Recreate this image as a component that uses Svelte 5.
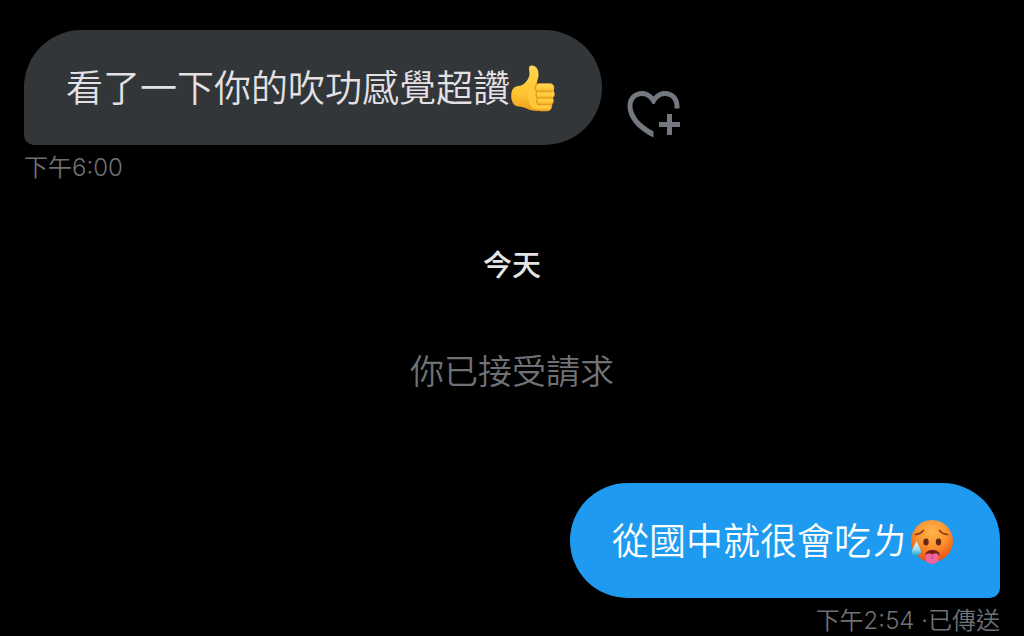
<script>
  let liked = $state(false);
</script>

<main class="chat">
  <article class="message received">
    <div class="row">
      <p class="bubble">
        <span>看了一下你的吹功感覺超讚</span>
        <svg class="emoji" viewBox="0 0 48 48" role="img" aria-label="👍">
          <defs>
            <linearGradient id="hand" x1="0" y1="0" x2="0" y2="1">
              <stop offset="0" stop-color="#ffd84f" />
              <stop offset=".6" stop-color="#ffc532" />
              <stop offset="1" stop-color="#eca01c" />
            </linearGradient>
            <linearGradient id="finger" x1="0" y1="0" x2="0" y2="1">
              <stop offset="0" stop-color="#ffdc58" />
              <stop offset=".65" stop-color="#ffc738" />
              <stop offset="1" stop-color="#e6981b" />
            </linearGradient>
          </defs>
          <path fill="url(#hand)" d="M4 23.500C7 21.500 10 22.500 13 20.500C17 17.500 19.500 14 19.500 9C19.500 6 17.500 2 21.500 1.500C26.500 1 29 6.500 28.500 11.500C28.200 15 27 17 26.500 20H40C43 20 44.500 22 44 25L42 43C41.500 46 39 47 35 47H27C20 47 17 44 12 43L6 42C0 39 0 27 4 23.500Z" />
          <g fill="url(#finger)" stroke="#e7a020" stroke-width=".6">
            <rect x="27" y="39" width="14" height="8" rx="4" />
            <rect x="26" y="32.500" width="17.500" height="8.500" rx="4.200" />
            <rect x="25.500" y="26" width="19" height="8.500" rx="4.200" />
            <rect x="25.500" y="19.500" width="18.500" height="8.500" rx="4.200" />
          </g>
          <path fill="#ffc73a" d="M18 20H27C26 23 27 26 27 28C26 31 27 34 28 36C27 40 28 42 30 45H24C18 42 17 30 18 20Z" />
          <path fill="none" stroke="#df981d" stroke-width="1.200" stroke-linecap="round" d="M27 19.500C24.500 22 24.500 26 27 27.500C25.500 30 26 33 27.500 34C26 37 26.500 40 29 41" />
        </svg>
      </p>
      <button class="like" type="button" aria-label="新增回應" aria-pressed={liked} onclick={() => (liked = !liked)}>
        <svg viewBox="0 0 54 48" aria-hidden="true">
          <path fill="currentColor" d="M26.500 6.500C29.500 3 33.500 1 38 1C46.500 1 52.500 7.500 52.500 16V18.500H47.500V16C47.500 10 43.500 6 38 6C33.500 6 30 9 27.500 14H25.500C23 9 19.500 6 15 6C9.500 6 5.500 10 5.500 16C5.500 24.500 12.500 34 26.500 41.500V47.500C10.500 40 .5 28 .5 16C.5 7.500 6.500 1 15 1C19.500 1 23.500 3 26.500 6.500Z" />
          <path fill="none" stroke="currentColor" stroke-width="5" d="M42.500 24V45M32 34.500H53" />
        </svg>
      </button>
    </div>
    <time class="meta">下午6:00</time>
  </article>

  <h2 class="day">今天</h2>
  <p class="notice">你已接受請求</p>

  <article class="message sent">
    <p class="bubble">
      <span>從國中就很會吃ㄌ</span>
      <svg class="emoji" viewBox="0 0 48 48" role="img" aria-label="🥵">
        <defs>
          <radialGradient id="face" cx=".5" cy=".28" r=".72">
            <stop offset="0" stop-color="#ffb44d" />
            <stop offset=".5" stop-color="#fa942f" />
            <stop offset="1" stop-color="#ed4d12" />
          </radialGradient>
          <linearGradient id="drop" x1="0" y1="0" x2="0" y2="1">
            <stop offset="0" stop-color="#eefcff" />
            <stop offset=".55" stop-color="#91def5" />
            <stop offset="1" stop-color="#2499c8" />
          </linearGradient>
        </defs>
        <circle cx="24" cy="24" r="21" fill="url(#face)" />
        <path fill="none" stroke="#8b3812" stroke-width="1.700" stroke-linecap="round" d="M7.500 17.500C11 17.300 13.500 16 15.300 13.500M31.500 13.500C33.500 16 36 17.300 39.500 17.500" />
        <ellipse cx="18" cy="25" rx="2.700" ry="3.400" fill="#652710" />
        <ellipse cx="30.500" cy="25" rx="2.700" ry="3.400" fill="#652710" />
        <path fill="#702012" d="M17.500 38.500C16 31 33 31 31.500 38.500C30 39.500 19 39.500 17.500 38.500Z" />
        <path fill="#f0649e" d="M18 37.500C20 36 23 36.500 24.200 37.500C25.500 36.500 29 36 30.500 37.500V42C30.500 48.500 18 48.500 18 42Z" />
        <path fill="none" stroke="#d13e7c" stroke-width="1" stroke-linecap="round" d="M24.200 38V42" />
        <path fill="url(#drop)" d="M8.500 24C10 28.500 13 31 13 35C13 40.500 4 40.500 4 35C4 31 7 28.500 8.500 24Z" />
      </svg>
    </p>
    <p class="meta"><time>下午2:54</time> ·已傳送</p>
  </article>
</main>

<style>
  :global(body) { margin: 0; background: #000; }

  .chat {
    display: flex;
    flex-direction: column;
    padding: 30px 24px 0;
    color: #6e7276;
    font-family: Inter, "Noto Sans CJK TC", sans-serif;
  }

  p, h2 { margin: 0; }

  .message { display: flex; flex-direction: column; }
  .received { align-items: flex-start; }
  .sent { align-items: flex-end; }
  .row { display: flex; align-items: center; gap: 25px; }

  .bubble {
    display: flex;
    align-items: flex-start;
    padding: 34px 44px 32px 42px;
    border-radius: 58px;
    font-size: 37px;
    font-weight: 350;
    line-height: 49px;
  }
  .received .bubble { background: #323639; color: #e3e1e5; border-bottom-left-radius: 10px; }
  .sent .bubble { background: #1e9bf0; color: #fff; border-bottom-right-radius: 10px; }

  .emoji { width: 48px; height: 48px; flex: none; }

  .like {
    display: flex;
    padding: 52px 0 0;
    border: 0;
    background: none;
    color: #74797f;
    cursor: pointer;
  }
  .like svg { width: 54px; height: 48px; }

  .meta {
    margin-top: 7px;
    font-size: 24px;
    font-weight: 350;
    line-height: 32px;
  }

  .day {
    margin-top: 62px;
    color: #e3e4e5;
    font-size: 29px;
    font-weight: 500;
    line-height: 40px;
    text-align: center;
  }

  .notice {
    margin: 62px 0 87px;
    font-size: 34px;
    font-weight: 350;
    line-height: 48px;
    text-align: center;
  }
</style>
